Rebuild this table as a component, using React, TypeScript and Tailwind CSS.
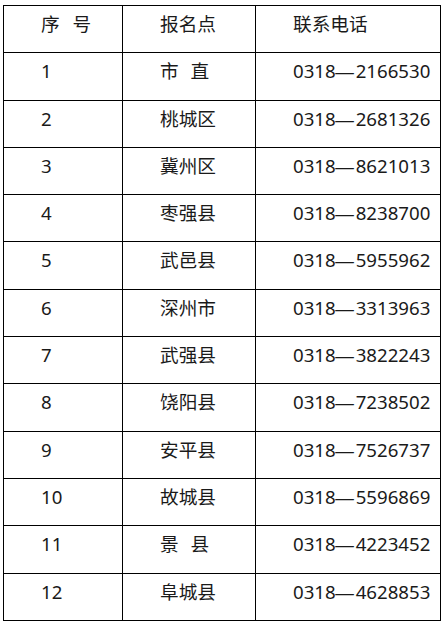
import React from "react";

const rows: [string, string, string, string][] = [
  ["1", "市 直", "2166530", "[word-spacing:7px]"],
  ["2", "桃城区", "2681326", ""],
  ["3", "冀州区", "8621013", ""],
  ["4", "枣强县", "8238700", ""],
  ["5", "武邑县", "5955962", ""],
  ["6", "深州市", "3313963", ""],
  ["7", "武强县", "3822243", ""],
  ["8", "饶阳县", "7238502", ""],
  ["9", "安平县", "7526737", ""],
  ["10", "故城县", "5596869", ""],
  ["11", "景 县", "4223452", "[word-spacing:7px]"],
  ["12", "阜城县", "4628853", ""],
];

const font = "[font-family:'Noto_Sans','Noto_Sans_CJK_SC',sans-serif]";

function Cell({ children, extra = "" }: { children: React.ReactNode; extra?: string }) {
  return (
    <div
      className={`h-[47.3px] border-r border-b border-black pl-[37px] pt-[6px] text-[18.67px] leading-[24px] text-[#1a1a1a] whitespace-pre ${extra}`}
    >
      {children}
    </div>
  );
}

export default function App() {
  return (
    <div className={`bg-white w-[445px] h-[625px] pl-[3px] pt-[5px] ${font}`}>
      <div className="grid grid-cols-[119px_133px_185px] border-l border-t border-black w-max">
        <Cell extra="[word-spacing:8px]">序 号</Cell>
        <Cell>报名点</Cell>
        <Cell>联系电话</Cell>
        {rows.map(([n, name, tel, ws]) => (
          <React.Fragment key={n}>
            <Cell>{n}</Cell>
            <Cell extra={ws}>{name}</Cell>
            <Cell>
              0318<span className="[font-family:'Liberation_Sans',sans-serif] inline-block w-[21px] -mx-[0.5px]">—</span>
              {tel}
            </Cell>
          </React.Fragment>
        ))}
      </div>
    </div>
  );
}
